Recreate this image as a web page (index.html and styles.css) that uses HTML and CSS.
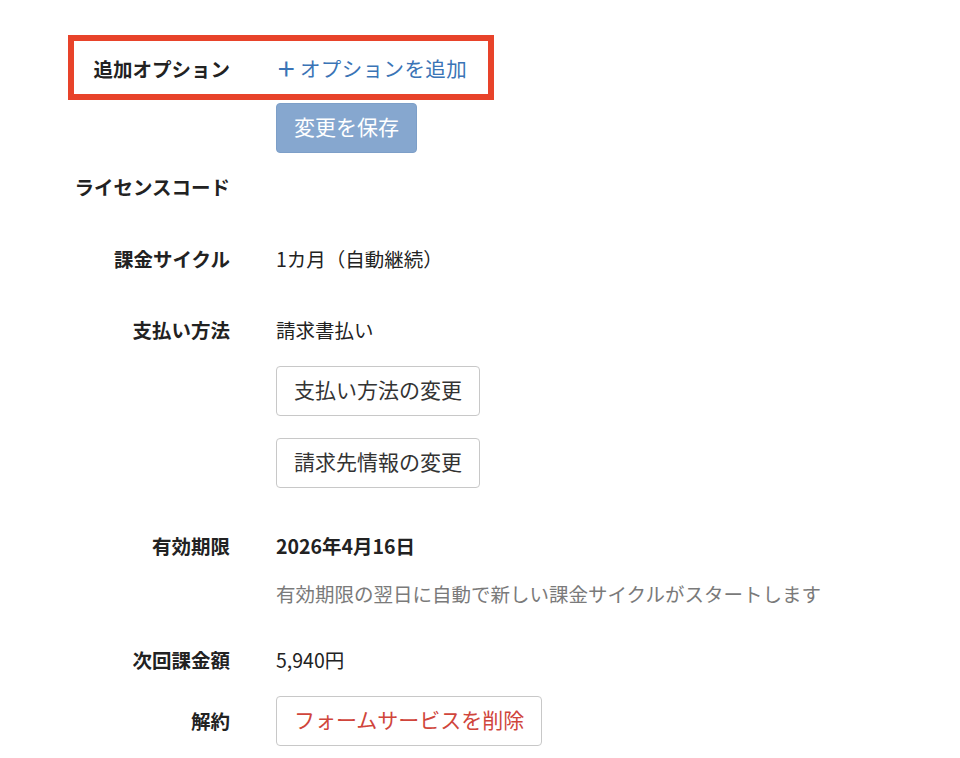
FILE: index.html
```html
<!DOCTYPE html>
<html lang="ja">
<head>
<meta charset="utf-8">
<link rel="stylesheet" href="styles.css">
</head>
<body>
<div class="page">
  <div class="row highlight">
    <div class="label">追加オプション</div>
    <div class="value"><a class="link" href="#"><span class="plus">＋</span>オプションを追加</a></div>
  </div>
  <div class="row save-row">
    <div class="label"></div>
    <div class="value"><button class="btn btn-primary">変更を保存</button></div>
  </div>
  <div class="row r-license">
    <div class="label">ライセンスコード</div>
    <div class="value"></div>
  </div>
  <div class="row r-cycle">
    <div class="label">課金サイクル</div>
    <div class="value">1カ月（自動継続）</div>
  </div>
  <div class="row r-pay">
    <div class="label">支払い方法</div>
    <div class="value stack">
      <div>請求書払い</div>
      <div><button class="btn">支払い方法の変更</button></div>
      <div><button class="btn">請求先情報の変更</button></div>
    </div>
  </div>
  <div class="row r-expire">
    <div class="label">有効期限</div>
    <div class="value stack-sm">
      <div class="strong">2026年4月16日</div>
      <div class="note">有効期限の翌日に自動で新しい課金サイクルがスタートします</div>
    </div>
  </div>
  <div class="row r-next">
    <div class="label">次回課金額</div>
    <div class="value">5,940円</div>
  </div>
  <div class="row r-cancel">
    <div class="label">解約</div>
    <div class="value"><button class="btn btn-danger">フォームサービスを削除</button></div>
  </div>
</div>
</body>
</html>
```

FILE: styles.css
```css
* { box-sizing: border-box; }
html, body { margin: 0; padding: 0; background: #fff; }
body {
  font-family: "Noto Sans CJK JP", "Noto Sans", sans-serif;
  font-size: 19.5px;
  color: #222;
}
.page {
  padding: 35px 0 0 68px;
}
.row {
  display: grid;
  grid-template-columns: 162px auto;
  column-gap: 46px;
  align-items: start;
  line-height: 28px;
}
.label {
  text-align: right;
  font-weight: bold;
  white-space: nowrap;
  color: #222;
}
.highlight {
  width: 426px;
  height: 65px;
  border: 6px solid #e8432a;
  grid-template-columns: 156px auto;
  align-items: center;
  padding-top: 2px;
}
.link {
  color: #3a74b6;
  text-decoration: none;
  font-size: 20.5px;
  letter-spacing: 0.4px;
}
.plus { font-weight: bold; margin-right: 3px; }
.save-row { margin-top: 3px; }
.btn {
  font-family: inherit;
  font-size: 21px;
  line-height: 28px;
  height: 50px;
  padding: 0 17px 4px;
  border: 1px solid #c8c8c8;
  border-radius: 4px;
  background: #fff;
  color: #333;
  cursor: pointer;
}
.btn-primary {
  background: #86a7cf;
  border-color: #7d9fc8;
  color: #fff;
}
.btn-danger { color: #d0453b; }
.r-license { margin-top: 20px; }
.r-cycle { margin-top: 44px; }
.r-pay { margin-top: 43px; }
.stack { display: flex; flex-direction: column; gap: 22px; }
.r-expire { margin-top: 44px; }
.stack-sm { display: flex; flex-direction: column; gap: 20px; }
.strong { font-weight: bold; }
.note { color: #7a7a7a; }
.r-next { margin-top: 38px; }
.r-cancel { margin-top: 22px; align-items: center; }
```
